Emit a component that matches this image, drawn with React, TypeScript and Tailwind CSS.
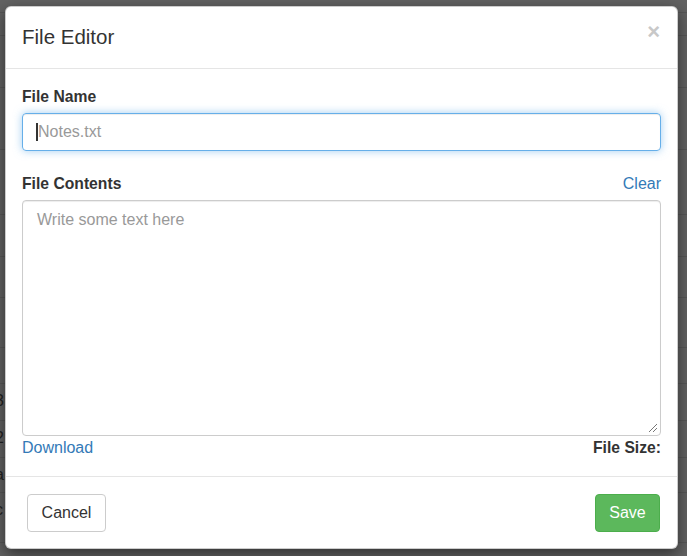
import React from "react";

const rows: { h: number; t?: string }[] = [
  { h: 13 },
  { h: 23 },
  { h: 52 },
  { h: 62 },
  { h: 65 },
  { h: 42 },
  { h: 41 },
  { h: 50 },
  { h: 36 },
  { h: 37, t: "3" },
  { h: 37, t: "2" },
  { h: 35, t: "a." },
  { h: 50, t: "c" },
];

export default function App() {
  return (
    <div
      className="relative w-[687px] h-[556px] overflow-hidden bg-[#626262]"
      style={{ fontFamily: '"Liberation Sans", Arial, sans-serif' }}
    >
      {/* page behind backdrop */}
      <div className="flex flex-col">
        {rows.map((r, i) => (
          <div
            key={i}
            className="border-b border-[#575757] flex items-start pt-[7px] text-[16px] leading-[20px] text-[#222] ml-[-5px]"
            style={{ height: r.h }}
          >
            {r.t}
          </div>
        ))}
      </div>

      {/* modal */}
      <div className="absolute left-[5px] top-[6px] w-[673px] bg-white rounded-[6px] border border-[rgba(0,0,0,0.2)] shadow-[0_5px_15px_rgba(0,0,0,0.5)] flex flex-col">
        <div className="h-[62px] border-b border-[#e5e5e5] flex items-center justify-between pl-[16px] pr-[17px]">
          <h4 className="text-[20.5px] text-[#333] leading-none mt-[-1px]">File Editor</h4>
          <span className="text-[22px] font-bold text-[#c8c8c8] leading-none mt-[-12px]">×</span>
        </div>

        <div className="px-[16px] pt-[18px] pb-[18px] flex flex-col">
          <label className="text-[15.7px] font-bold text-[#333] leading-[20px] mb-[6px]">File Name</label>
          <div className="h-[38px] rounded-[4px] border border-[#66afe9] shadow-[inset_0_1px_1px_rgba(0,0,0,0.075),0_0_8px_rgba(102,175,233,0.6)] flex items-center pl-[13px]">
            <span className="w-[2px] h-[18px] bg-[#333]"></span>
            <span className="text-[16px] text-[#999] leading-none">Notes.txt</span>
          </div>

          <div className="flex justify-between items-center mt-[23px] mb-[6px] leading-[20px]">
            <label className="text-[15.7px] font-bold text-[#333]">File Contents</label>
            <span className="text-[16px] text-[#337ab7]">Clear</span>
          </div>
          <div className="relative h-[236px] rounded-[4px] border border-[#ccc] shadow-[inset_0_1px_1px_rgba(0,0,0,0.075)] px-[14px] pt-[7px]">
            <span className="text-[16px] text-[#999] leading-[20px]">Write some text here</span>
            <svg className="absolute right-[2px] bottom-[2px]" width="10" height="10" viewBox="0 0 10 10">
              <line x1="9" y1="1" x2="1" y2="9" stroke="#777" strokeWidth="1" />
              <line x1="9" y1="5" x2="5" y2="9" stroke="#777" strokeWidth="1" />
            </svg>
          </div>
          <div className="flex justify-between items-center leading-[20px] mt-[2px]">
            <span className="text-[16px] text-[#337ab7]">Download</span>
            <span className="text-[15.7px] font-bold text-[#333]">File Size:</span>
          </div>
        </div>

        <div className="border-t border-[#e5e5e5] flex justify-between items-center pl-[21px] pr-[17px] pt-[17px] pb-[16px]">
          <button className="h-[38px] w-[79px] rounded-[4px] border border-[#ccc] bg-white text-[16px] text-[#333]">
            Cancel
          </button>
          <button className="h-[38px] w-[65px] rounded-[4px] border border-[#4cae4c] bg-[#5cb85c] text-[16px] text-white">
            Save
          </button>
        </div>
      </div>
    </div>
  );
}
